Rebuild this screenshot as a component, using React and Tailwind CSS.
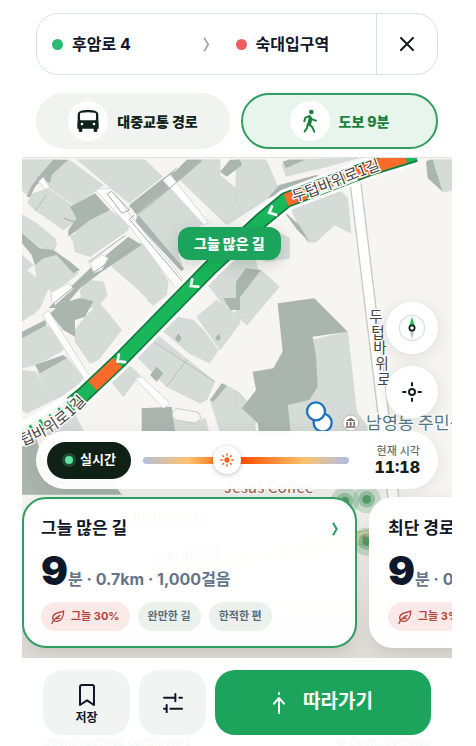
import React, { useState } from "react";

const BUILDINGS = [
  // north-west blocks
  "0,5 109,5 54,51 39,66 39,86 14,111 0,96",
  "139,5 149,11 244,81 219,101 154,141 74,83 69,66 89,51",
  "30,108 79,91 154,146 174,171 159,191 124,216 39,156 16,135",
  "159,226 174,191 259,156 319,186 319,216 204,296 159,281 154,251 144,236",
  "0,171 44,196 99,241 104,261 94,281 54,266 0,226",
  "39,321 64,301 104,291 169,346 124,381 89,401 44,361",
  "165,5 369,5 422,56 322,136 256,81",
  "344,181 446,84 549,195 474,241 469,291 486,335",
  "500,5 594,5 594,51 654,101 720,60 770,100 662,171 614,201 474,66",
  "194,366 244,371 256,411 224,450 184,450 174,400",
  "324,271 364,251 439,371 434,411 394,441 344,391 269,326 284,301",
  "0,291 34,321 14,336 79,391 54,450 0,490",
  "594,331 654,290 700,300 720,400 654,450 604,441 554,376",
  // north-east blocks
  "642,5 732,5 770,90 660,170 642,120",
  "800,5 1010,0 900,30 792,55 780,20",
  "807,151 952,96 977,121 987,226 937,201 882,253 857,253 832,211",
  "742,206 802,241 802,301 737,311 690,296",
  "642,411 717,336 772,386 700,472 675,502 642,470",
  "1232,5 1290,5 1290,97 1264,103",
  // south-west blocks
  "0,426 54,441 39,466 0,486",
  "194,471 234,436 299,516 229,606 204,616 159,551 159,516",
  "0,526 69,501 109,521 124,576 54,616 0,631",
  "44,641 134,596 189,666 164,696 94,726",
  "0,636 39,641 94,726 14,766 0,756",
  "374,426 394,441 405,426",
  "419,516 464,476 514,486 544,516 589,576 564,616 500,585",
  "364,531 399,526 579,671 554,726 534,736 434,686 344,596",
  "259,661 304,606 354,651 304,716",
  "524,476 584,426 654,476 654,496 594,576",
  "564,726 604,676 654,706 700,760 700,820 594,820",
  "60,780 150,750 190,830 70,830",
  "454,786 514,796 550,780 560,820 440,820",
  // large southern block
  "870,546 977,521 1004,761 1037,806 1040,830 800,830 797,741 862,726 885,686",
  "642,696 667,721 642,746",
];

const SHADOWS = [
  "94,5 139,5 89,51 84,76 49,56",
  "49,56 65,60 39,86 24,118 14,116 28,85",
  "144,146 219,106 264,156 204,186 139,236 139,216 164,181",
  "0,226 54,271 94,276 144,311 174,336 154,346 104,291 64,301 39,321 29,291 0,256",
  "322,141 424,61 464,36 494,5 540,5 464,71 344,171",
  "349,171 486,332 478,340 339,191",
  "594,41 624,5 654,5 660,21 614,56",
  "199,336 319,236 359,261 239,341 174,391 124,450 80,450",
  "737,121 772,81 882,51 902,56 792,101",
  "782,11 800,5 850,5 792,30",
  "782,156 832,201 862,251 826,216",
  "642,371 672,331 717,336 652,421 642,420",
  "1212,11 1222,5 1232,5 1262,101 1217,61",
  "84,466 119,436 174,420 214,430 189,476 159,486 159,536 124,516",
  "0,521 69,486 74,501 0,541",
  "39,621 124,591 134,601 54,646",
  "359,751 449,746 459,820 359,820",
  "564,726 599,676 614,684 574,731",
  "459,541 469,526 479,541 469,554",
  "384,651 404,626 424,646 404,671",
  "579,541 590,528 597,540 588,550",
  "604,420 654,420 654,456 624,456",
  "767,436 877,421 977,521 872,536 882,596 887,686 862,726 797,741 807,830 712,830 707,796 660,751 702,696 692,641 754,631 782,581",
  "0,850 40,830 60,900 240,930 300,1010 0,1010",
];

const ROADS = [
  "219,94 269,91 324,171 490,371 469,401 330,215",
  "422,66 445,50 560,195 545,200",
  "205,315 240,290 258,300 240,335 215,345",
  "50,70 64,58 84,90 70,94",
  "88,404 140,375 154,392 100,440 88,430",
  "60,470 80,458 206,660 196,680 190,668",
  "339,661 359,656 444,736 424,751",
];

// x, y and heading of the arrows along the walking route
const CHEVRONS = [
  [752, 160, 18],
  [516, 378, 4],
  [296, 604, 4],
];

function CityMap() {
  return (
    <svg
      aria-hidden="true"
      className="absolute inset-0 h-full w-full"
      viewBox="0 0 1290 1500"
      preserveAspectRatio="xMidYMid slice"
    >
      <defs>
        <path id="upper-road" d="M816 132 C900 108 980 66 1110 22" />
        <path id="lower-road" d="M-60 886 C50 850 120 815 194 730" />
        <linearGradient id="haze" x1="0" y1="0" x2="0" y2="1">
          <stop offset="0" stopColor="#e9e6e2" stopOpacity="0" />
          <stop offset="1" stopColor="#dedad6" />
        </linearGradient>
      </defs>
      <rect width="1290" height="1500" fill="#f6f5f2" />
      <g fill="#d5dcd8" stroke="#c6cec9" strokeWidth="1">
        {BUILDINGS.map((p) => <polygon key={p} points={p} />)}
      </g>
      <g fill="#aab5ae">
        {SHADOWS.map((p) => <polygon key={p} points={p} />)}
      </g>
      <g fill="#fff" stroke="#d6dbd8" strokeWidth="3">
        {ROADS.map((p) => <polygon key={p} points={p} />)}
      </g>
      <g fill="none" stroke="#a4ada8" strokeWidth="3">
        <path d="M256 108L268 100L322 156L300 166ZM336 172L322 184L488 378M464 30L322 150M540 8L344 175M350 255L195 355L90 440M310 232L200 312M158 192L124 180" />
        <path d="M39 160L75 108M434 686L495 605M364 531L579 671" strokeWidth="2" />
        <rect x="450" y="756" width="86" height="34" rx="17" transform="rotate(10 490 772)" stroke="#c6cec9" />
      </g>
      <path d="M1000 70L1064 600L1120 1070L1190 1500" fill="none" stroke="#c3cbc7" strokeWidth="36" />
      <path d="M1000 70L1064 600L1120 1070L1190 1500" fill="none" stroke="#fff" strokeWidth="28" />
      <path d="M200 1290L1290 1090" stroke="#c9b98a" strokeWidth="42" />
      <path d="M200 1290L1290 1090" stroke="#f8e6bd" strokeWidth="36" />
      <path d="M200 1290L1290 1090" stroke="#ef7a33" strokeWidth="12" strokeLinecap="round" strokeDasharray="2 28" />
      <rect y="1050" width="1290" height="450" fill="url(#haze)" />
      <g fill="none" strokeLinejoin="round">
        <path d="M1180 -12L1050 28L792 126L720 185L564 330L294 606L183 711L100 770L-20 840" stroke="#fff" strokeWidth="66" />
        <path d="M1180 -12L1050 28L792 126L720 185L564 330L294 606L183 711L150 738" stroke="#10773a" strokeWidth="48" />
        <path d="M1180 -12L1050 28L792 126L720 185L564 330L294 606L183 711L150 738" stroke="#19b65a" strokeWidth="38" />
        <path d="M1150 -4L1050 28L792 126M286 614L212 684" stroke="#fa6a2a" strokeWidth="38" />
        <path d="M1000 47L850 104M160 732L100 780L-20 846" stroke="#eef6ee" strokeWidth="44" />
        <path d="M985 53L850 104M150 742L90 784L0 834" stroke="#19b65a" strokeWidth="34" strokeDasharray="8 26" />
        <path d="M970 58L870 96" stroke="#fa6a2a" strokeWidth="26" strokeDasharray="8 34" />
      </g>
      {CHEVRONS.map(([x, y, turn]) => (
        <path
          key={x}
          d="M-6 -17L-9 7L17 7"
          transform={`translate(${x} ${y}) rotate(${turn})`}
          fill="none"
          stroke="#fff"
          strokeWidth="8"
        />
      ))}
      <g fontFamily="'Noto Sans CJK KR', sans-serif" fill="#4b4340" stroke="#fff" strokeWidth="8" strokeLinejoin="round" paintOrder="stroke">
        <text fontSize="46"><textPath href="#upper-road">두텁바위로1길</textPath></text>
        <text fontSize="46" textAnchor="end"><textPath href="#lower-road" startOffset="100%">텁바위로1길</textPath></text>
        <g fontSize="44" textAnchor="middle">
          <text x="1062" y="492">두</text>
          <text x="1068" y="539">텁</text>
          <text x="1074" y="586">바</text>
          <text x="1080" y="633">위</text>
          <text x="1086" y="680">로</text>
        </g>
        <text x="1032" y="812" fontSize="52" fill="#557886">남영동 주민센터</text>
        <text x="606" y="1006" fontSize="46" fill="#a4634f">Jesus Coffee</text>
        <text x="330" y="1102" fontSize="50" fill="#a4634f">파리바게뜨</text>
        <text x="0" y="1115" fontSize="46" fill="#a4634f">피자</text>
        <text x="394" y="1230" fontSize="46" transform="rotate(-8 394 1230)">두텁바위로</text>
      </g>
      <g fill="#fff" stroke="#1d74bd" strokeWidth="7">
        <circle cx="902" cy="794" r="27" />
        <circle cx="882" cy="760" r="27" />
      </g>
      <g transform="translate(986 795)">
        <circle r="24" fill="#fff" stroke="#bfb8b4" strokeWidth="3" />
        <path d="M-15 -6L0 -16L15 -6ZM-13 -3H-8V8H-13ZM-3 -3H3V8H-3ZM8 -3H13V8H8ZM-15 10H15V14H-15Z" fill="#806a61" />
      </g>
      {[[1034, 1024], [969, 1029], [1034, 1151]].map(([x, y]) => (
        <g key={`${x}-${y}`} transform={`translate(${x} ${y})`} fill="#4c9863">
          <circle r="42" opacity=".25" />
          <circle r="25" opacity=".4" />
          <circle r="13" opacity=".9" />
        </g>
      ))}
    </svg>
  );
}

function BusIcon() {
  return (
    <svg viewBox="0 0 66 66" className="h-[22px] w-[22px]" aria-hidden="true">
      <path fillRule="evenodd" fill="#10231a" d="M2 14C2 4 14 0 33 0S64 4 64 14V34L65 37V56H61V62Q61 66 57 66H54Q50 66 50 62V56H16V62Q16 66 12 66H9Q5 66 5 62V56H1V37L2 34ZM9 12V28Q9 31 12 31H54Q57 31 57 28V12Q57 9 53 8Q33 5 13 8Q9 9 9 12ZM15 38A4 4 0 1 0 15 46A4 4 0 1 0 15 38M51 38A4 4 0 1 0 51 46A4 4 0 1 0 51 38Z" />
    </svg>
  );
}

function WalkIcon() {
  return (
    <svg viewBox="0 0 48 72" className="h-6 w-4" fill="none" stroke="#1c7f3c" strokeWidth="6" strokeLinecap="round" strokeLinejoin="round" aria-hidden="true">
      <circle cx="28" cy="9" r="7" fill="#1c7f3c" stroke="none" />
      <path d="M7 37L10 26L23 21L30 31L42 35M24 23L19 44L30 53L37 68M17 46L15 57L8 67M28 28L25 44" />
    </svg>
  );
}

function SunIcon() {
  return (
    <svg viewBox="0 0 42 42" className="h-[14px] w-[14px]" stroke="#f0641c" strokeWidth="4" strokeLinecap="round" aria-hidden="true">
      <circle cx="21" cy="21" r="8" fill="#f0641c" stroke="none" />
      <path d="M21 2V7M21 35V40M2 21H7M35 21H40M8 8L11 11M31 31L34 34M34 8L31 11M8 34L11 31" />
    </svg>
  );
}

function LeafIcon() {
  return (
    <svg viewBox="0 0 40 42" className="size-[14px] shrink-0" fill="none" stroke="#b3473f" strokeWidth="4" strokeLinecap="round" strokeLinejoin="round" aria-hidden="true">
      <path d="M37 3C30 8 12 6 6 17C1 26 7 35 16 34C31 33 37 18 37 3ZM2 40C6 29 15 22 26 16M13 26L24 25" />
    </svg>
  );
}

function RouteCard({ title, rest, shade, tags, selected }) {
  return (
    <article
      className={
        "w-[335px] shrink-0 rounded-3xl border-2 bg-white/97 px-[17px] pt-[18px] pb-[15px] shadow-[0_4px_14px_rgba(60,50,40,0.14)] " +
        (selected ? "border-[#2f9e60]" : "border-transparent")
      }
    >
      <div className="flex h-6 items-center justify-between">
        <h2 className="text-[17px] font-bold whitespace-nowrap">{title}</h2>
        {selected && (
          <svg viewBox="0 0 18 42" className="h-[14px] w-[6px]" fill="none" stroke="#25a05b" strokeWidth="6" aria-hidden="true">
            <path d="M3 2L14 21L3 40" />
          </svg>
        )}
      </div>
      <p className="mt-[9px] flex h-[42px] items-baseline whitespace-nowrap text-[#667489]">
        <span className="text-[40px] leading-[42px] font-black text-[#0f172a]">9</span>
        <span className="text-[16px] font-bold">{rest}</span>
      </p>
      <div className="mt-[10px] flex gap-2 text-[11px] font-bold whitespace-nowrap">
        <span className="flex h-[29px] items-center gap-[6px] rounded-full bg-[#fbe9e8] px-[10px] text-[#b3473f]">
          <LeafIcon />
          {shade}
        </span>
        {tags.map((t) => (
          <span key={t} className="flex h-[29px] items-center rounded-full bg-[#ebf2ee] px-[10px] text-[#5b6b7d]">{t}</span>
        ))}
      </div>
    </article>
  );
}

const roundButton = "flex size-[52px] items-center justify-center rounded-full bg-white shadow-[0_3px_16px_rgba(40,50,45,0.12)]";

export default function App() {
  const [time, setTime] = useState(41);

  return (
    <div className="bg-white pr-6 pl-[22px]">
      <main className="mx-auto max-w-[430px] overflow-hidden font-[Inter,'Noto_Sans_CJK_KR',sans-serif] text-[#0f172a]">
        <header className="border-b border-[#dfe3e0] px-[14px] pt-[13px] pb-2">
          <div className="flex h-[62px] items-stretch rounded-[22px] border border-[#d9dfdc] text-[16px] font-bold">
            <button className="flex flex-1 items-center gap-[9px] pl-[15px]">
              <span className="size-[11px] rounded-full bg-[#2bb974]" />
              후암로 4
            </button>
            <span className="flex w-7 items-center justify-center">
              <svg viewBox="0 0 20 44" className="h-[15px] w-[7px]" fill="none" stroke="#98a2b3" strokeWidth="5" aria-hidden="true">
                <path d="M3 2L15 22L3 42" />
              </svg>
            </span>
            <button className="flex flex-1 items-center gap-[9px] pl-[15px]">
              <span className="size-[11px] rounded-full bg-[#f05f5f]" />
              숙대입구역
            </button>
            <button aria-label="닫기" className="flex w-[61px] items-center justify-center border-l border-[#d9dfdc]">
              <svg viewBox="0 0 42 42" className="size-[14px]" stroke="#14201a" strokeWidth="6" strokeLinecap="round" aria-hidden="true">
                <path d="M3 3L39 39M39 3L3 39" />
              </svg>
            </button>
          </div>
          <nav className="mt-[18px] grid grid-cols-[194fr_197fr] gap-[11px] text-[14px] font-extrabold">
            <button className="flex h-14 items-center justify-center gap-[9px] rounded-full bg-[#f1f3f1] text-[#10231a]">
              <span className="flex size-10 items-center justify-center rounded-full bg-white"><BusIcon /></span>
              대중교통 경로
            </button>
            <button aria-pressed="true" className="flex h-14 items-center justify-center gap-[9px] rounded-full border-2 border-[#2f9e60] bg-[#e7f5ec] text-[#1c7f3c]">
              <span className="flex size-10 items-center justify-center rounded-full bg-white"><WalkIcon /></span>
              도보 9분
            </button>
          </nav>
        </header>

        <section className="relative flex min-h-[500px] flex-col justify-end overflow-hidden pb-[10px]">
          <CityMap />
          <span className="absolute top-[69px] left-[156px] flex h-[33px] items-center rounded-xl bg-[#1ca45c] px-4 text-[14px] font-extrabold whitespace-nowrap text-white shadow-[0_4px_16px_rgba(20,60,40,0.18)]">
            그늘 많은 길
          </span>

          <div className="relative mr-[14px] mb-[13px] flex flex-col gap-3 self-end">
            <button aria-label="나침반" className={roundButton}>
              <svg viewBox="0 0 84 84" className="size-7" aria-hidden="true">
                <circle cx="42" cy="42" r="38" fill="#fff" stroke="#dfe9e2" strokeWidth="5" />
                <path d="M42 8L52 42H32Z" fill="#22c04e" />
                <path d="M42 76L50 42H34Z" fill="#b4bfc6" />
                <circle cx="42" cy="42" r="8" fill="#fff" stroke="#10231a" strokeWidth="5" />
              </svg>
            </button>
            <button aria-label="내 위치" className={roundButton}>
              <svg viewBox="0 0 60 60" className="size-5" fill="none" stroke="#14201a" strokeWidth="6" aria-hidden="true">
                <circle cx="30" cy="30" r="9" />
                <path d="M30 1V13M30 47V59M1 30H13M47 30H59" />
              </svg>
            </button>
          </div>

          <div className="relative mx-[14px] flex h-[58px] items-center gap-3 rounded-full bg-white/95 pr-[18px] pl-[11px] shadow-[0_3px_16px_rgba(40,50,45,0.10)]">
            <button className="flex h-[37px] w-[84px] items-center justify-center gap-1 rounded-full bg-[#0f2015] text-[13px] font-bold text-white">
              <span className="flex size-[14px] items-center justify-center rounded-full bg-[#1f4a35]">
                <span className="size-2 rounded-full bg-[#5ee29c]" />
              </span>
              실시간
            </button>
            <div className="relative flex h-7 flex-1 items-center">
              <input
                type="range"
                aria-label="시각"
                min="0"
                max="100"
                value={time}
                onChange={(e) => setTime(Number(e.target.value))}
                className="h-[7px] w-full appearance-none rounded-full bg-[linear-gradient(90deg,#b4bfdd_0%,#fdc26b_22%,#fb5607_42%,#fb5607_50%,#fdc26b_78%,#b4bfdd_98%)] [&::-webkit-slider-thumb]:size-7 [&::-webkit-slider-thumb]:appearance-none"
              />
              <span
                className="pointer-events-none absolute flex size-7 -translate-x-1/2 items-center justify-center rounded-full bg-white shadow-[0_1px_5px_rgba(0,0,0,0.25)]"
                style={{ left: `${time}%` }}
              >
                <SunIcon />
              </span>
            </div>
            <div className="ml-[10px] flex w-[49px] flex-col items-end whitespace-nowrap">
              <span className="text-[11px] leading-[14px] font-medium text-[#66736c]">현재 시각</span>
              <time className="text-[16px] leading-[18px] font-extrabold tabular-nums text-[#10231a]">11:18</time>
            </div>
          </div>

          <div className="relative mt-2 flex gap-3">
            <RouteCard selected title="그늘 많은 길" rest="분 · 0.7km · 1,000걸음" shade="그늘 30%" tags={["완만한 길", "한적한 편"]} />
            <RouteCard title="최단 경로" rest="분 · 0.7km · 1,000걸음" shade="그늘 3%" tags={["완만한 길"]} />
          </div>
        </section>

        <footer className="px-[21px] pt-3">
          <div className="flex gap-[9px]">
            <button className="flex h-[65px] w-[87px] flex-col items-center justify-center gap-1 rounded-[20px] bg-[#f2f4f4] pt-1 text-[12px] leading-4 font-bold">
              <svg viewBox="0 0 48 66" className="h-[22px] w-4" fill="none" stroke="#0f172a" strokeWidth="6" strokeLinejoin="round" aria-hidden="true">
                <path d="M3 9Q3 3 9 3H39Q45 3 45 9V63L24 49L3 63Z" />
              </svg>
              저장
            </button>
            <button aria-label="설정" className="flex h-[65px] w-[67px] items-center justify-center rounded-[20px] bg-[#f2f4f4]">
              <svg viewBox="0 0 60 60" className="size-5" fill="none" stroke="#0f172a" strokeWidth="6" strokeLinecap="round" aria-hidden="true">
                <path d="M3 14H36M37 3V25M49 14H57M3 47H9M11 36V58M22 47H57" />
              </svg>
            </button>
            <button className="flex h-[65px] flex-1 items-center justify-center gap-[18px] rounded-[20px] bg-[#1ca45c] text-[19px] font-bold text-white">
              <svg viewBox="0 0 36 66" className="h-[22px] w-3" fill="none" stroke="#fff" strokeWidth="6" strokeLinecap="round" strokeLinejoin="round" aria-hidden="true">
                <path d="M18 63V20M3 35L18 18L33 35M18 3V6" />
              </svg>
              따라가기
            </button>
          </div>
          <p className="flex h-[11px] justify-between overflow-hidden text-[11px] leading-[14px] text-[#f7f8f8]">
            <span>OpenStreetMap contributors</span>
            <span>© OpenStreetMap</span>
          </p>
        </footer>
      </main>
    </div>
  );
}
